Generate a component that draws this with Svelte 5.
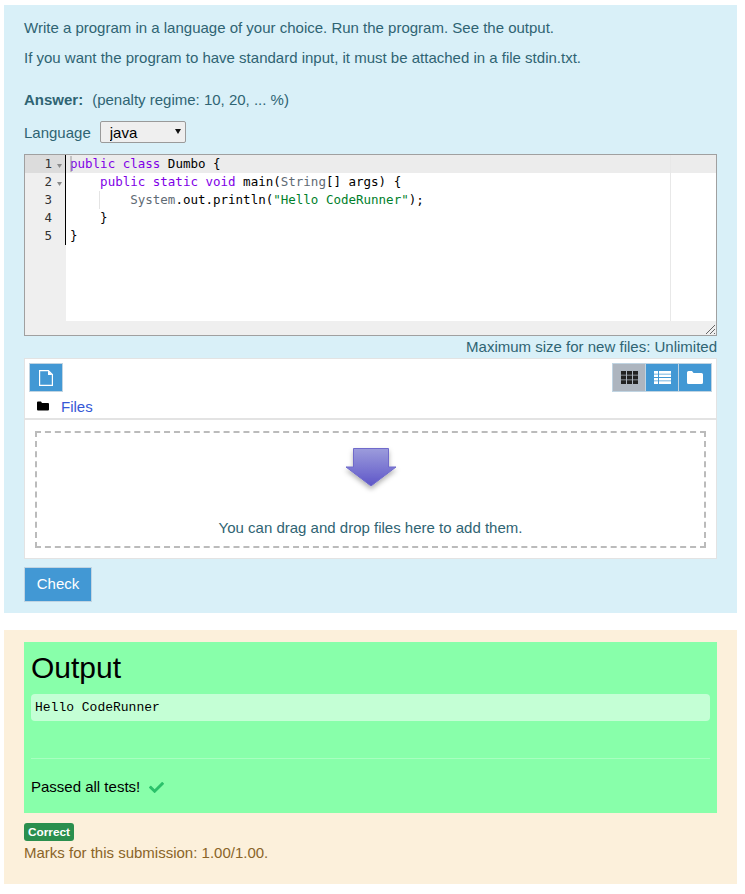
<script>
  let language = "java";
  const lines = [1, 2, 3, 4, 5];
</script>

<div class="page">
  <section class="formulation">
    <p class="intro">Write a program in a language of your choice. Run the program. See the output.</p>
    <p class="intro">If you want the program to have standard input, it must be attached in a file stdin.txt.</p>

    <div class="prompt"><b>Answer:</b><span>(penalty regime: 10, 20, ... %)</span></div>

    <div class="language">
      <span>Language</span>
      <span class="select-wrap">
        <select bind:value={language}>
          <option value="java">java</option>
        </select>
      </span>
    </div>

    <div class="editor">
      <div class="gutter">
        {#each lines as n}
          <div class="gutter-line" class:active={n === 1}>
            {n}
            <span class="fold">{#if n < 3}<svg width="5" height="5" viewBox="0 0 5 5"><path d="M0 1h5L2.500 5z" fill="#8a8a8a" /></svg>{/if}</span>
          </div>
        {/each}
      </div>
      <div class="code">
        <div class="margin"></div>
        <div class="code-lines">
          <div class="line active"><span class="kw">public</span> <span class="kw">class</span> Dumbo {"{"}</div>
          <div class="line">{"    "}<span class="kw">public</span> <span class="kw">static</span> <span class="kw">void</span> main(<span class="type">String</span>[] args) {"{"}</div>
          <div class="line">{"        "}<span class="type">System</span>.out.println(<span class="str">"Hello CodeRunner"</span>);</div>
          <div class="line">{"    "}{"}"}</div>
          <div class="line">{"}"}</div>
        </div>
        <div class="guide"></div>
        <div class="caret"></div>
        <div class="cursor"></div>
      </div>
      <svg class="grip" width="9" height="9" viewBox="0 0 9 9"><path d="M0 9l9-9M4 9l5-5M8 9l1-1" stroke="#666" fill="none" /></svg>
    </div>

    <div class="max-size">Maximum size for new files: Unlimited</div>

    <div class="filemanager">
      <div class="toolbar">
        <button class="icon-btn" aria-label="Add file">
          <svg width="14" height="16" viewBox="0 0 14 16"><path d="M.6.6h8.800l4 4v10.800H.6z" fill="none" stroke="#fff" stroke-width="1.200" /><path d="M9 .6l4.400 4.400H9z" fill="#fff" /></svg>
        </button>
        <div class="views">
          <button class="icon-btn selected" aria-label="Icons">
            <svg width="17" height="13" viewBox="0 0 17 13"><path d="M0 0h5v3.800H0zM6 0h5v3.800H6zM12 0h5v3.800h-5zM0 4.600h5v3.800H0zM6 4.600h5v3.800H6zM12 4.600h5v3.800h-5zM0 9.200h5V13H0zM6 9.200h5V13H6zM12 9.200h5V13h-5z" fill="#222" /></svg>
          </button>
          <button class="icon-btn" aria-label="List">
            <svg width="17" height="13" viewBox="0 0 17 13"><path d="M0 0h4v2.700H0zM5 0h12v2.700H5zM0 3.400h4v2.700H0zM5 3.400h12v2.700H5zM0 6.900h4v2.700H0zM5 6.900h12v2.700H5zM0 10.300h4V13H0zM5 10.300h12V13H5z" fill="#fff" /></svg>
          </button>
          <button class="icon-btn" aria-label="Tree">
            <svg width="16" height="13" viewBox="0 0 16 13"><path d="M0 1.500Q0 0 1.500 0h3.500l1.500 2h8Q16 2 16 3.500v8q0 1.500-1.500 1.500h-13Q0 13 0 11.500z" fill="#fff" /></svg>
          </button>
        </div>
      </div>
      <div class="path">
        <svg width="12" height="10" viewBox="0 0 12 10"><path d="M0 1.500Q0 .5 1 .5h3l1 1.500h6q1 0 1 1v5.500q0 1-1 1H1q-1 0-1-1z" fill="#000" /></svg>
        <span>Files</span>
      </div>
      <div class="dropzone-wrap">
        <div class="dropzone">
          <svg class="arrow" width="60" height="50" viewBox="0 0 60 50">
            <defs>
              <linearGradient id="arrowFill" x1="0" y1="0" x2="0" y2="1">
                <stop offset="0" stop-color="#9c9cdc" />
                <stop offset="1" stop-color="#5e56c8" />
              </linearGradient>
              <filter id="arrowShadow" x="-30%" y="-30%" width="160%" height="170%">
                <feDropShadow dx="0" dy="3" stdDeviation="2.500" flood-color="#000" flood-opacity="0.3" />
              </filter>
            </defs>
            <path d="M12.500 3.500h35v18.500h7.500L30 41 5 22h7.500z" fill="url(#arrowFill)" stroke="#6f6acb" stroke-width="1" filter="url(#arrowShadow)" />
          </svg>
          <div class="drop-text">You can drag and drop files here to add them.</div>
        </div>
      </div>
    </div>

    <button class="check">Check</button>
  </section>

  <section class="outcome">
    <div class="result">
      <h3>Output</h3>
      <pre>Hello CodeRunner</pre>
      <hr />
      <div class="passed">
        Passed all tests!
        <svg width="15" height="15" viewBox="0 0 512 512"><path d="M173.898 439.404l-166.400-166.400c-9.997-9.997-9.997-26.206 0-36.204l36.203-36.204c9.997-9.998 26.207-9.998 36.204 0L192 312.690 432.095 72.596c9.997-9.997 26.207-9.997 36.204 0l36.203 36.204c9.997 9.997 9.997 26.206 0 36.204l-294.400 294.401c-9.998 9.997-26.207 9.997-36.204-.001z" fill="#2bc16a" /></svg>
      </div>
    </div>
    <div class="feedback">
      <span class="badge">Correct</span>
      <div class="marks">Marks for this submission: 1.00/1.00.</div>
    </div>
  </section>
</div>

<style>
  :global(body) {
    margin: 0;
    background: #fff;
    font-family: "Liberation Sans", Arial, sans-serif;
    font-size: 15px;
  }
  .page {
    padding: 5px 8px 10px 4px;
  }
  .formulation {
    box-sizing: border-box;
    height: 608px;
    background: #d9f0f8;
    color: #2f6473;
    padding: 12px 20px 10px;
  }
  .intro {
    margin: 0 0 8px;
    line-height: 22px;
    height: 22px;
  }
  .prompt {
    margin-top: 20px;
    line-height: 22px;
    display: flex;
    gap: 9px;
  }
  .language {
    margin-top: 9px;
    display: flex;
    align-items: center;
    gap: 9px;
    height: 24px;
  }
  .select-wrap {
    position: relative;
    display: flex;
  }
  .select-wrap::after {
    content: "";
    position: absolute;
    left: 75px;
    top: 8px;
    border: solid transparent;
    border-width: 5px 3px 0;
    border-top-color: #111;
    pointer-events: none;
  }
  select {
    appearance: none;
    width: 86px;
    height: 22px;
    padding: 0 0 0 9px;
    font: 15px "Liberation Sans", Arial, sans-serif;
    color: #000;
    background: #efefef;
    border: 1px solid #9a9a9a;
    border-radius: 2px;
  }
  .editor {
    position: relative;
    display: flex;
    margin-top: 10px;
    height: 180px;
    border: 1px solid #a0a0a0;
    background: #efefef;
  }
  .gutter {
    width: 41px;
    flex: none;
    font: 12.5px/18px "DejaVu Sans Mono", monospace;
    color: #333;
  }
  .gutter-line {
    height: 18px;
    padding-right: 3px;
    display: flex;
    justify-content: flex-end;
    gap: 5px;
  }
  .gutter-line.active {
    background: #dcdcdc;
  }
  .fold {
    width: 6px;
    display: flex;
    align-items: center;
    padding-top: 2px;
  }
  .code {
    position: relative;
    flex: 1;
    height: 166px;
    background: #fff;
    font: 12.5px/18px "DejaVu Sans Mono", monospace;
    color: #000;
  }
  .code-lines {
    position: relative;
    padding-left: 4px;
  }
  .line {
    height: 18px;
    white-space: pre;
  }
  .line.active {
    background: #ececec;
    margin-left: -4px;
    padding-left: 4px;
  }
  .margin {
    position: absolute;
    top: 0;
    bottom: 0;
    left: 604px;
    width: 1px;
    background: #e8e8e8;
    z-index: 1;
  }
  .cursor {
    position: absolute;
    left: -1px;
    top: 0;
    height: 90px;
    width: 1px;
    background: #000;
  }
  .caret {
    position: absolute;
    left: 4px;
    top: 1px;
    height: 16px;
    width: 2px;
    background: #9a9a9a;
    opacity: 0.5;
  }
  .guide {
    position: absolute;
    left: 33px;
    top: 36px;
    height: 18px;
    width: 1px;
    background: #e4e4e4;
  }
  .kw { color: #8000e6; }
  .type { color: #5f6b75; }
  .str { color: #00802b; }
  .grip {
    position: absolute;
    right: 1px;
    bottom: 1px;
  }
  .max-size {
    text-align: right;
    line-height: 21px;
  }
  .filemanager {
    margin-top: 1px;
    background: #fff;
    border: 1px solid #e3e3e3;
  }
  .toolbar {
    display: flex;
    justify-content: space-between;
    padding: 4px 4px 0 4px;
  }
  .toolbar > .icon-btn {
    width: 34px;
  }
  .views {
    display: flex;
  }
  .icon-btn {
    width: 34px;
    height: 29px;
    padding: 0;
    display: flex;
    align-items: center;
    justify-content: center;
    background: #4298d4;
    border: 1px solid #c0d4e2;
  }
  .views .icon-btn + .icon-btn {
    margin-left: -1px;
  }
  .icon-btn.selected {
    background: #adb5bf;
  }
  .path {
    display: flex;
    align-items: center;
    gap: 12px;
    height: 24px;
    padding: 2px 0 0 12px;
    color: #3558d6;
    border-bottom: 2px solid #e3e3e3;
  }
  .dropzone-wrap {
    padding: 11px 10px 10px;
  }
  .dropzone {
    height: 113px;
    border: 2px dashed #bbb;
    text-align: center;
    box-sizing: content-box;
  }
  .arrow {
    display: block;
    margin: 12px auto 0;
  }
  .drop-text {
    margin-top: 22px;
    line-height: 22px;
  }
  .check {
    display: block;
    margin-top: 8px;
    width: 68px;
    height: 35px;
    padding: 0 0 2px;
    background: #4298d4;
    color: #fff;
    font: 15px "Liberation Sans", Arial, sans-serif;
    border: 1px solid #c0d4e2;
  }
  .outcome {
    box-sizing: border-box;
    margin-top: 17px;
    height: 254px;
    padding: 12px 20px 0;
    background: #fcf0db;
    color: #8a6428;
  }
  .result {
    background: #88ffaa;
    color: #000;
    padding: 8px 7px 0;
    height: 163px;
  }
  h3 {
    margin: 0;
    font-weight: 400;
    font-size: 30px;
    line-height: 35px;
  }
  pre {
    margin: 9px 0 0;
    height: 27px;
    padding: 0 4px;
    background: #c4ffd5;
    border-radius: 4px;
    font: 13px/28px "Liberation Mono", monospace;
  }
  hr {
    margin: 37px 0 0;
    border: 0;
    border-top: 1px solid #a8ffc0;
  }
  .passed {
    margin-top: 17px;
    line-height: 22px;
    display: flex;
    align-items: center;
    gap: 9px;
  }
  .feedback {
    margin-top: 10px;
  }
  .badge {
    display: inline-block;
    background: #2a8f4e;
    color: #fff;
    font-size: 11.8px;
    font-weight: 700;
    line-height: 18px;
    padding: 0 4px;
    border-radius: 3px;
    vertical-align: top;
  }
  .marks {
    line-height: 22px;
    margin-top: 1px;
  }
</style>
